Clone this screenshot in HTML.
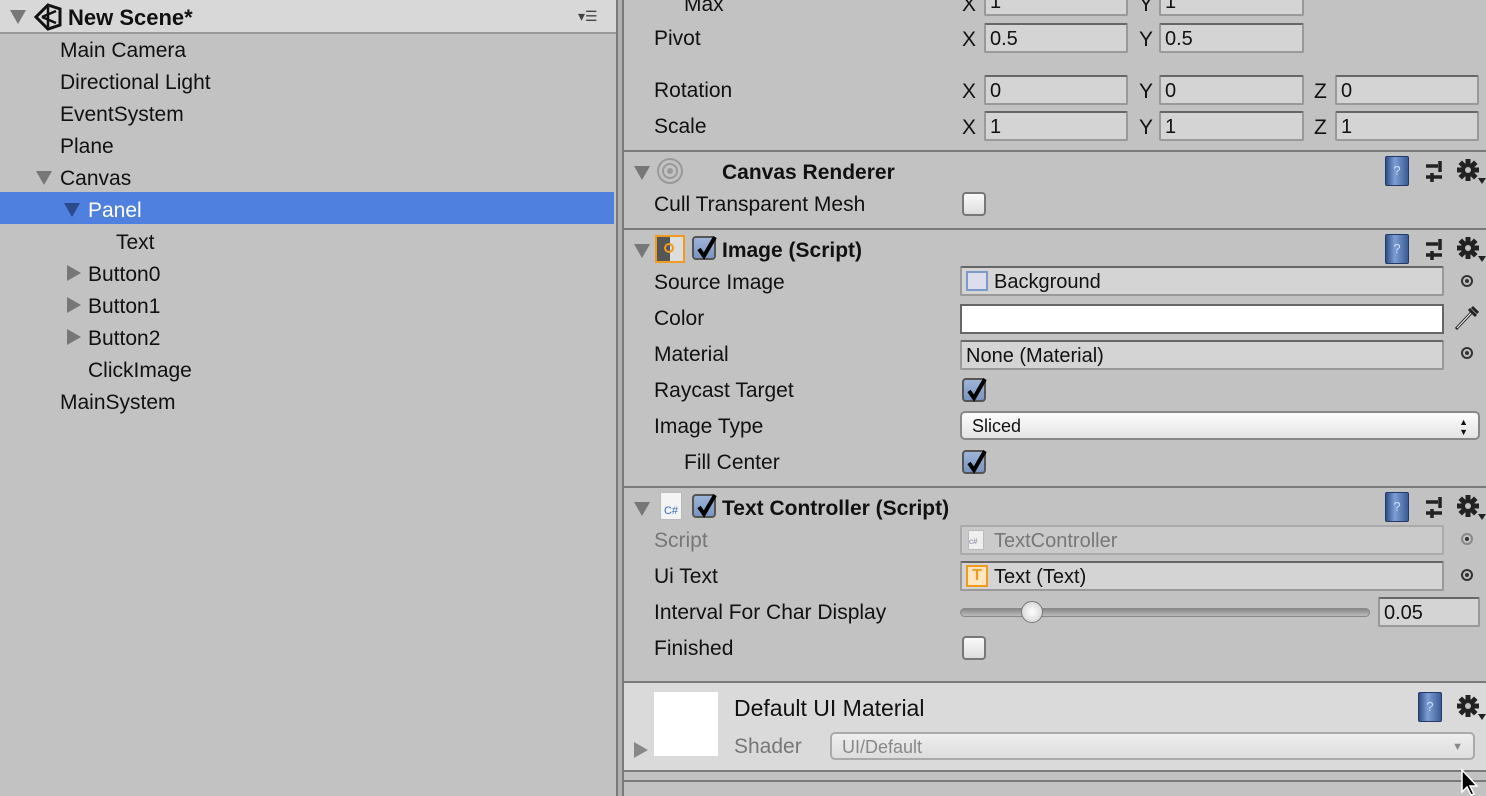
<!DOCTYPE html>
<html><head><meta charset="utf-8"><style>
*{margin:0;padding:0;box-sizing:border-box}
body{width:1486px;height:796px;overflow:hidden;background:#c2c2c2;font-family:"Liberation Sans",sans-serif;font-size:21px;color:#111;position:relative}
.a{position:absolute;white-space:nowrap}
.t{line-height:32px;height:32px;padding-top:2px}
.tri{position:absolute;width:0;height:0;border-left:8px solid transparent;border-right:8px solid transparent;border-top:14px solid #777}
.trr{position:absolute;width:0;height:0;border-top:8px solid transparent;border-bottom:8px solid transparent;border-left:14px solid #777}
.f{position:absolute;background:#d4d4d4;border:2px solid #999;border-top-color:#666;border-radius:2px;height:30px;line-height:28px;padding-left:4px;font-size:20px}
.sep{position:absolute;left:624px;right:0;height:2px;background:#7a7a7a}
.cb{position:absolute;width:24px;height:24px;border:2px solid #777;border-radius:4px;background:linear-gradient(#fafafa,#ddd)}
.cbc{position:absolute;width:24px;height:24px;border:2px solid #555;border-radius:4px;background:linear-gradient(#9db4d8,#7b95c0)}
.cbc svg{position:absolute;left:1px;top:-3px}
.b{font-weight:bold}
.ic{position:absolute;width:24px;height:30px;border-radius:2px;background:linear-gradient(90deg,#2f4f86,#7d9ed4 40%,#3c5c96);border:1px solid #233a66;color:#cfe0ff;font-size:13px;text-align:center;line-height:28px}
.dot{position:absolute;width:12px;height:12px;border:2px solid #333;border-radius:50%}
.dot:after{content:"";position:absolute;left:2px;top:2px;width:4px;height:4px;background:#333;border-radius:50%}
</style></head><body>
<svg width="0" height="0" style="position:absolute"><defs>
<symbol id="chk" viewBox="0 0 24 26"><path d="M4 14 L9 21 L20 2" fill="none" stroke="#000" stroke-width="4"/></symbol>
<symbol id="sl" viewBox="0 0 20 26"><path d="M2 8 H14 M16 3 V14 M2 19 H18 M8 15 V24" stroke="#222" stroke-width="3.5"/></symbol>
<symbol id="gr" viewBox="0 0 30 28"><g transform="translate(12 12)" fill="#222"><circle r="7"/><g id="tt"><rect x="-2.5" y="-11" width="5" height="22"/></g><rect x="-2.5" y="-11" width="5" height="22" transform="rotate(45)"/><rect x="-2.5" y="-11" width="5" height="22" transform="rotate(90)"/><rect x="-2.5" y="-11" width="5" height="22" transform="rotate(135)"/><circle r="3" fill="#c2c2c2"/></g><path d="M22 20 H30 L26 26 Z" fill="#222"/></symbol>
</defs></svg>
<!-- left panel -->
<div class="a" style="left:0;top:0;width:616px;height:34px;background:#d8d8d8;border-bottom:2px solid #9a9a9a"></div>
<div class="tri" style="left:10px;top:10px"></div>
<svg class="a" style="left:34px;top:3px" width="28" height="28" viewBox="0 0 28 28"><path d="M14 2 L26 6 L26 22 L14 26 L2 14 Z" fill="none" stroke="#111" stroke-width="3"/><path d="M8 14 L22 8 M8 14 L22 20 M14 4 L14 24" stroke="#111" stroke-width="2.5"/></svg>
<div class="a b" style="left:68px;top:3px;line-height:30px;font-size:22px">New Scene*</div>
<div class="a" style="left:578px;top:8px;font-size:14px;color:#444">▾☰</div>
<div class="a" style="left:0;top:192px;width:614px;height:32px;background:#4f7fdf"></div>
<div class="a t" style="left:60px;top:33px">Main Camera</div>
<div class="a t" style="left:60px;top:65px">Directional Light</div>
<div class="a t" style="left:60px;top:97px">EventSystem</div>
<div class="a t" style="left:60px;top:129px">Plane</div>
<div class="tri" style="left:36px;top:171px"></div>
<div class="a t" style="left:60px;top:161px">Canvas</div>
<div class="tri" style="left:64px;top:203px;border-top-color:#2b4a8c"></div>
<div class="a t" style="left:88px;top:193px;color:#fff">Panel</div>
<div class="a t" style="left:116px;top:225px">Text</div>
<div class="trr" style="left:67px;top:265px"></div><div class="a t" style="left:88px;top:257px">Button0</div>
<div class="trr" style="left:67px;top:297px"></div><div class="a t" style="left:88px;top:289px">Button1</div>
<div class="trr" style="left:67px;top:329px"></div><div class="a t" style="left:88px;top:321px">Button2</div>
<div class="a t" style="left:88px;top:353px">ClickImage</div>
<div class="a t" style="left:60px;top:385px">MainSystem</div>
<!-- divider -->
<div class="a" style="left:616px;top:0;width:2px;height:796px;background:#7a7a7a"></div>
<div class="a" style="left:618px;top:0;width:4px;height:796px;background:#b0b0b0"></div>
<div class="a" style="left:622px;top:0;width:2px;height:796px;background:#7a7a7a"></div>
<!-- transform -->
<div class="a t" style="left:684px;top:-13px">Max</div>
<div class="a t" style="left:962px;top:-13px">X</div><div class="f" style="left:984px;top:-14px;width:144px">1</div>
<div class="a t" style="left:1139px;top:-13px">Y</div><div class="f" style="left:1159px;top:-14px;width:145px">1</div>
<div class="a t" style="left:654px;top:21px">Pivot</div>
<div class="a t" style="left:962px;top:22px">X</div><div class="f" style="left:984px;top:23px;width:144px">0.5</div>
<div class="a t" style="left:1139px;top:22px">Y</div><div class="f" style="left:1159px;top:23px;width:145px">0.5</div>
<div class="a t" style="left:654px;top:73px">Rotation</div>
<div class="a t" style="left:962px;top:74px">X</div><div class="f" style="left:984px;top:75px;width:144px">0</div>
<div class="a t" style="left:1139px;top:74px">Y</div><div class="f" style="left:1159px;top:75px;width:145px">0</div>
<div class="a t" style="left:1314px;top:74px">Z</div><div class="f" style="left:1335px;top:75px;width:144px">0</div>
<div class="a t" style="left:654px;top:109px">Scale</div>
<div class="a t" style="left:962px;top:110px">X</div><div class="f" style="left:984px;top:111px;width:144px">1</div>
<div class="a t" style="left:1139px;top:110px">Y</div><div class="f" style="left:1159px;top:111px;width:145px">1</div>
<div class="a t" style="left:1314px;top:110px">Z</div><div class="f" style="left:1335px;top:111px;width:144px">1</div>
<div class="sep" style="top:150px"></div>
<!-- header icons -->
<div class="ic" style="left:1385px;top:156px">?</div><svg class="a" style="left:1424px;top:158px" width="20" height="26"><use href="#sl"/></svg><svg class="a" style="left:1456px;top:158px" width="30" height="28"><use href="#gr"/></svg>
<div class="ic" style="left:1385px;top:234px">?</div><svg class="a" style="left:1424px;top:236px" width="20" height="26"><use href="#sl"/></svg><svg class="a" style="left:1456px;top:236px" width="30" height="28"><use href="#gr"/></svg>
<div class="ic" style="left:1385px;top:492px">?</div><svg class="a" style="left:1424px;top:494px" width="20" height="26"><use href="#sl"/></svg><svg class="a" style="left:1456px;top:494px" width="30" height="28"><use href="#gr"/></svg>
<!-- canvas renderer -->
<div class="tri" style="left:634px;top:166px"></div>
<svg class="a" style="left:654px;top:157px" width="32" height="28"><circle cx="16" cy="14" r="12" fill="none" stroke="#999" stroke-width="2"/><circle cx="16" cy="14" r="7" fill="none" stroke="#999" stroke-width="2"/><circle cx="16" cy="14" r="3" fill="#999"/></svg>
<div class="a t b" style="left:722px;top:155px">Canvas Renderer</div>
<div class="a t" style="left:654px;top:187px">Cull Transparent Mesh</div>
<div class="cb" style="left:962px;top:192px"></div>
<div class="sep" style="top:228px"></div>
<!-- image -->
<div class="tri" style="left:634px;top:244px"></div>
<div class="a" style="left:655px;top:235px;width:30px;height:28px;border:2px solid #f09a20;background:linear-gradient(90deg,#555 50%,#ddd 50%)"></div>
<div class="a" style="left:664px;top:243px;width:10px;height:10px;border:2px solid #f09a20;border-radius:50%"></div>
<div class="cbc" style="left:692px;top:236px"><svg width="24" height="26"><use href="#chk"/></svg></div>
<div class="a t b" style="left:722px;top:233px">Image (Script)</div>
<div class="a t" style="left:654px;top:265px">Source Image</div>
<div class="f" style="left:960px;top:266px;width:484px;padding-left:32px">Background</div>
<div class="a" style="left:966px;top:271px;width:22px;height:20px;border:2px solid #7c9ac8;background:#dde"></div>
<div class="dot" style="left:1461px;top:275px"></div>
<div class="a t" style="left:654px;top:301px">Color</div>
<div class="a" style="left:960px;top:304px;width:484px;height:30px;background:#fff;border:2px solid #666"></div>
<svg class="a" style="left:1452px;top:304px" width="28" height="28"><path d="M4 25 L20 8 M17 5 L24 12 M20 3 L26 9" stroke="#222" stroke-width="3" fill="none"/><path d="M5 24 L19 9" stroke="#fff" stroke-width="1"/></svg>
<div class="a t" style="left:654px;top:337px">Material</div>
<div class="f" style="left:960px;top:340px;width:484px">None (Material)</div>
<div class="dot" style="left:1461px;top:347px"></div>
<div class="a t" style="left:654px;top:373px">Raycast Target</div>
<div class="cbc" style="left:962px;top:378px"><svg width="24" height="26"><use href="#chk"/></svg></div>
<div class="a t" style="left:654px;top:409px">Image Type</div>
<div class="a" style="left:960px;top:411px;width:520px;height:29px;border:2px solid #888;border-radius:5px;background:linear-gradient(#fcfcfc,#e4e4e4);font-size:18px;line-height:26px;padding-left:10px">Sliced<span style="position:absolute;right:10px;top:1px;font-size:9px;line-height:10px;padding-top:3px">▲<br>▼</span></div>
<div class="a t" style="left:684px;top:445px">Fill Center</div>
<div class="cbc" style="left:962px;top:450px"><svg width="24" height="26"><use href="#chk"/></svg></div>
<div class="sep" style="top:486px"></div>
<!-- text controller -->
<div class="tri" style="left:634px;top:502px"></div>
<div class="a" style="left:660px;top:492px;width:22px;height:28px;background:#f4f4f4;border:1px solid #bbb;font-size:11px;color:#3a6ac8;line-height:36px;text-align:center">C#</div>
<div class="cbc" style="left:692px;top:494px"><svg width="24" height="26"><use href="#chk"/></svg></div>
<div class="a t b" style="left:722px;top:491px">Text Controller (Script)</div>
<div class="a t" style="left:654px;top:523px;color:#777">Script</div>
<div class="f" style="left:960px;top:525px;width:484px;padding-left:32px;color:#777;background:#cacaca;border-color:#aaa">TextController</div>
<div class="a" style="left:968px;top:530px;width:16px;height:20px;background:#eee;border:1px solid #bbb;font-size:8px;color:#88a;line-height:22px">c#</div>
<div class="dot" style="left:1461px;top:533px;border-color:#888"></div>
<div class="a t" style="left:654px;top:559px">Ui Text</div>
<div class="f" style="left:960px;top:561px;width:484px;padding-left:32px">Text (Text)</div>
<div class="a" style="left:966px;top:565px;width:22px;height:22px;border:2px solid #f09a20;background:#fde6c0;color:#f09a20;font-size:16px;font-weight:bold;text-align:center;line-height:18px">T</div>
<div class="dot" style="left:1461px;top:569px"></div>
<div class="a t" style="left:654px;top:595px">Interval For Char Display</div>
<div class="a" style="left:960px;top:608px;width:410px;height:9px;border-radius:5px;background:linear-gradient(#888,#bbb);border:1px solid #888"></div>
<div class="a" style="left:1021px;top:601px;width:22px;height:22px;border-radius:50%;border:1px solid #777;background:radial-gradient(#fff,#ccc)"></div>
<div class="f" style="left:1378px;top:597px;width:102px">0.05</div>
<div class="a t" style="left:654px;top:631px">Finished</div>
<div class="cb" style="left:962px;top:636px"></div>
<div class="sep" style="top:681px"></div>
<!-- material -->
<div class="a" style="left:624px;top:683px;width:862px;height:87px;background:#dadada"></div>
<div class="a" style="left:654px;top:692px;width:64px;height:64px;background:#fff"></div>
<div class="trr" style="left:634px;top:742px;border-left-color:#888"></div>
<div class="a" style="left:734px;top:691px;font-size:23px;line-height:34px">Default UI Material</div>
<div class="a" style="left:734px;top:731px;color:#777;line-height:32px">Shader</div>
<div class="a" style="left:830px;top:732px;width:645px;height:28px;border:2px solid #aaa;border-radius:5px;background:linear-gradient(#eee,#ddd);color:#888;font-size:18px;line-height:26px;padding-left:10px">UI/Default<span style="position:absolute;right:10px;font-size:11px">▼</span></div>
<div class="ic" style="left:1418px;top:692px">?</div><svg class="a" style="left:1456px;top:694px" width="30" height="28"><use href="#gr"/></svg>
<div class="sep" style="top:770px"></div>
<div class="sep" style="top:780px"></div>
<svg class="a" style="left:1460px;top:768px" width="22" height="28"><path d="M2 2 L2 24 L7 19 L11 27 L14 26 L10 18 L17 18 Z" fill="#000" stroke="#fff" stroke-width="1.5"/></svg>
</body></html>
